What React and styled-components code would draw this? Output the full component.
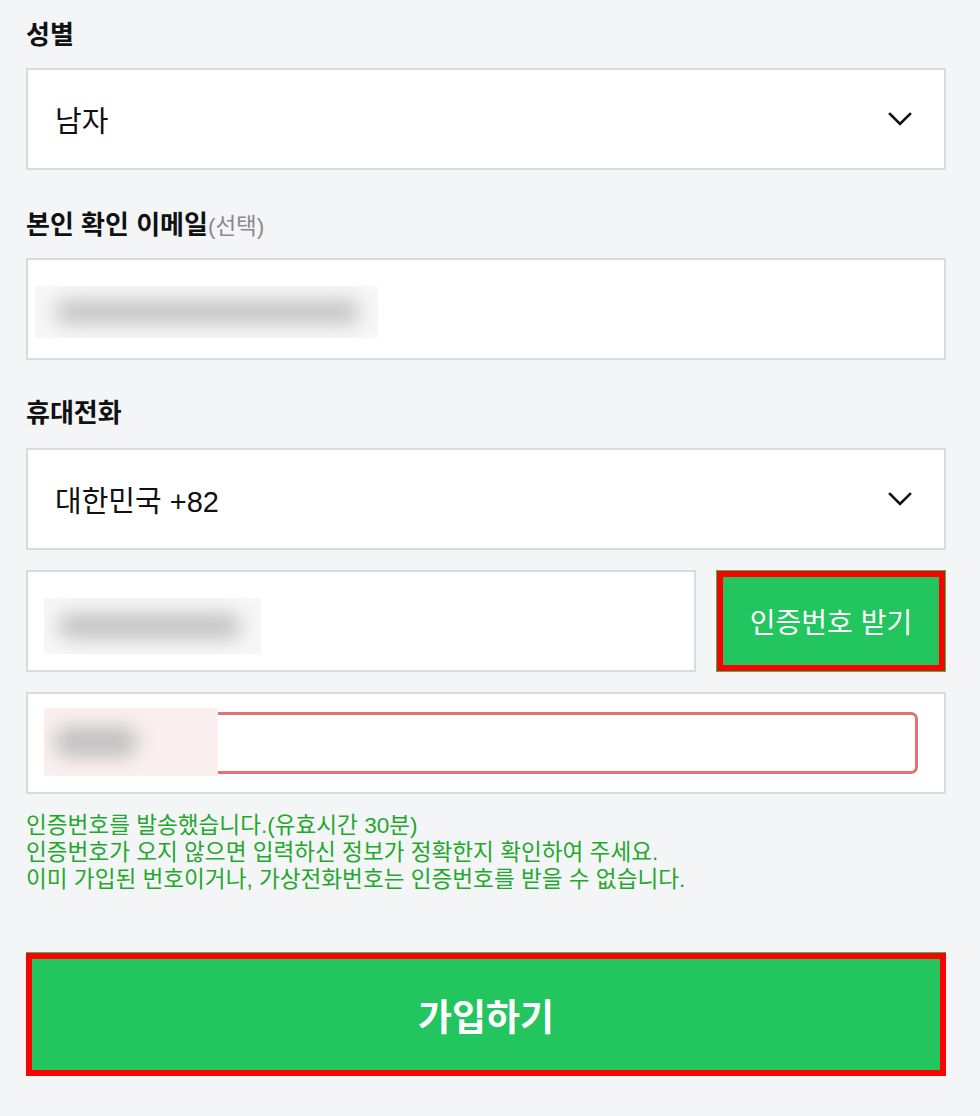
import React from "react";
import styled, { createGlobalStyle } from "styled-components";

const GlobalStyle = createGlobalStyle`
  html, body {
    margin: 0;
    padding: 0;
    background: #f4f5f7;
  }
  body {
    font-family: "Liberation Sans", "Noto Sans CJK KR", sans-serif;
    color: #111;
  }
`;

const Page = styled.div`
  width: 980px;
  height: 1116px;
  box-sizing: border-box;
  padding: 18px 34px 0 26px;
  overflow: hidden;
`;

const Label = styled.div`
  font-size: 26px;
  font-weight: 700;
  line-height: 34px;
  height: 34px;
  letter-spacing: 0;
  margin-top: ${(p) => p.$top || 0}px;
  margin-bottom: ${(p) => p.$bottom || 16}px;

  small {
    font-size: 22.5px;
    font-weight: 400;
    line-height: 1;
    color: #8a8a8a;
  }
`;

const Box = styled.div`
  position: relative;
  display: flex;
  align-items: center;
  box-sizing: border-box;
  height: 102px;
  flex: ${(p) => (p.$grow ? 1 : "none")};
  background: #fff;
  border: 2px solid #dadbdd;
  padding: 0 32px 0 27px;
`;

const SelectText = styled.span`
  flex: 1;
  font-size: 29px;
  color: #111;
`;

const Row = styled.div`
  display: flex;
  gap: 20px;
  margin-top: ${(p) => p.$top || 0}px;
`;

const Stack = styled.div`
  margin-top: ${(p) => p.$top || 0}px;
`;

const SendButton = styled.button`
  width: 230px;
  height: 102px;
  box-sizing: border-box;
  border: 1px solid #22c55e;
  outline: 6px solid #ff0000;
  outline-offset: -7px;
  background: #22c55e;
  color: #fff;
  font-family: inherit;
  font-size: 28px;
  cursor: pointer;
`;

const BlurMask = styled.div`
  position: absolute;
  left: ${(p) => p.$left}px;
  top: ${(p) => p.$top}px;
  width: ${(p) => p.$w}px;
  height: ${(p) => p.$h}px;
  overflow: hidden;
  background: ${(p) => p.$tint || "#f7f7f7"};

  &::after {
    content: "";
    position: absolute;
    left: ${(p) => p.$pad}px;
    right: ${(p) => p.$padR}px;
    top: 28%;
    bottom: 28%;
    border-radius: 20px;
    background: #bfbfbf;
    filter: blur(10px);
  }
`;

const CodeBox = styled(Box)`
  padding: 0 26px 0 16px;
`;

const CodeInput = styled.div`
  position: relative;
  width: 874px;
  height: 62px;
  box-sizing: border-box;
  border: 3px solid #e07377;
  border-radius: 7px;
  background: #fff;
`;

const Message = styled.p`
  margin: 18px 0 0;
  font-size: 22.6px;
  line-height: 27px;
  color: #1fa82c;
`;

const SubmitButton = styled.button`
  display: block;
  width: 920px;
  height: 123px;
  margin-top: 60px;
  box-sizing: border-box;
  border: 6px solid #ff0000;
  box-shadow: 0 -1px 0 #22c55e;
  background: #22c55e;
  color: #fff;
  font-family: inherit;
  font-size: 37px;
  font-weight: 700;
  cursor: pointer;
`;

const Chevron = () => (
  <svg width="24" height="14" viewBox="0 0 24 14" fill="none">
    <path d="M2 2 L12 12 L22 2" stroke="#111" strokeWidth="2.6" strokeLinecap="square" />
  </svg>
);

export default function App() {
  return (
    <>
      <GlobalStyle />
      <Page>
        <Label>성별</Label>
        <Box>
          <SelectText>남자</SelectText>
          <Chevron />
        </Box>

        <Label $top={38}>
          본인 확인 이메일<small>(선택)</small>
        </Label>
        <Box>
          <BlurMask $left={7} $top={26} $w={343} $h={52} $pad={20} $padR={18} />
        </Box>

        <Label $top={36} $bottom={18}>휴대전화</Label>
        <Box>
          <SelectText>대한민국 +82</SelectText>
          <Chevron />
        </Box>

        <Row $top={20}>
          <Box $grow>
            <BlurMask $left={16} $top={26} $w={217} $h={56} $pad={14} $padR={20} />
          </Box>
          <SendButton>인증번호 받기</SendButton>
        </Row>

        <Stack $top={20}>
          <CodeBox>
            <CodeInput />
            <BlurMask $left={16} $top={14} $w={174} $h={68} $tint="#fbf0f0" $pad={10} $padR={80} />
          </CodeBox>
        </Stack>

        <Message>
          인증번호를 발송했습니다.(유효시간 30분)
          <br />
          인증번호가 오지 않으면 입력하신 정보가 정확한지 확인하여 주세요.
          <br />
          이미 가입된 번호이거나, 가상전화번호는 인증번호를 받을 수 없습니다.
        </Message>

        <SubmitButton>가입하기</SubmitButton>
      </Page>
    </>
  );
}
